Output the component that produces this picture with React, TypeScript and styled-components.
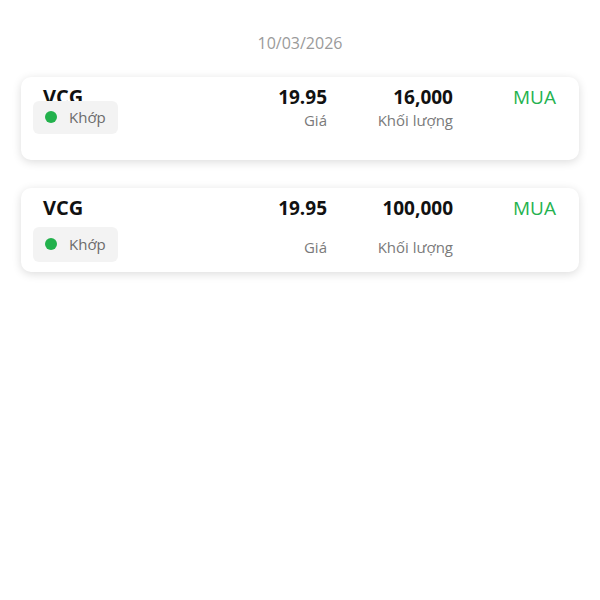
import React from "react";
import styled, { createGlobalStyle } from "styled-components";

interface OrderT {
  symbol: string;
  status: string;
  price: string;
  volume: string;
  side: string;
  collapsed?: boolean;
}

const orders: OrderT[] = [
  { symbol: "VCG", status: "Khớp", price: "19.95", volume: "16,000", side: "MUA", collapsed: true },
  { symbol: "VCG", status: "Khớp", price: "19.95", volume: "100,000", side: "MUA" },
];

export default function App() {
  return (
    <>
      <GlobalStyle />
      <Page>
        <DateLine>10/03/2026</DateLine>
        <List>
          {orders.map((o, i) => (
            <OrderCard key={i} order={o} />
          ))}
        </List>
      </Page>
    </>
  );
}

function OrderCard({ order }: { order: OrderT }) {
  return (
    <Card>
      <Row>
        <Left>
          <Symbol $collapsed={order.collapsed}>{order.symbol}</Symbol>
          <Badge $collapsed={order.collapsed}>
            <Dot />
            {order.status}
          </Badge>
        </Left>
        <NumCol $width={100}>
          <Value>{order.price}</Value>
          <Label>Giá</Label>
        </NumCol>
        <NumCol $width={126}>
          <Value>{order.volume}</Value>
          <Label>Khối lượng</Label>
        </NumCol>
        <NumCol $width={103}>
          <Side>{order.side}</Side>
        </NumCol>
      </Row>
    </Card>
  );
}

const GlobalStyle = createGlobalStyle`
  body {
    margin: 0;
    background: #fff;
    font-family: "Open Sans", "Noto Sans", sans-serif;
  }
`;

const Page = styled.div`
  padding: 32px 0 40px;
`;

const DateLine = styled.div`
  text-align: center;
  font-size: 16px;
  line-height: 22px;
  color: #9a9a9a;
`;

const List = styled.div`
  display: flex;
  flex-direction: column;
  gap: 28px;
  padding: 23px 21px 0;
`;

const Card = styled.div`
  min-height: 83px;
  box-sizing: border-box;
  padding: 7px 23px 10px 12px;
  background: #fff;
  border-radius: 10px;
  box-shadow: 0 2px 10px rgba(0, 0, 0, 0.14);
  display: flex;
  align-items: flex-start;
`;

const Row = styled.div`
  flex: 1;
  display: flex;
  align-items: stretch;
`;

const Left = styled.div`
  flex: 1;
  display: flex;
  flex-direction: column;
  align-items: flex-start;
`;

const Symbol = styled.div<{ $collapsed?: boolean }>`
  padding-left: 10px;
  font-size: 20px;
  font-weight: 700;
  line-height: 26px;
  color: #111;
  height: ${(p) => (p.$collapsed ? "16.5px" : "26px")};
  overflow: visible;
`;

const Badge = styled.div<{ $collapsed?: boolean }>`
  position: relative;
  margin-top: ${(p) => (p.$collapsed ? "0" : "5.5px")};
  height: ${(p) => (p.$collapsed ? "33px" : "35px")};
  display: flex;
  align-items: center;
  gap: 12px;
  padding: 0 12px;
  background: #f3f3f3;
  border-radius: 6px;
  font-size: 15px;
  color: #6b6b6b;
`;

const Dot = styled.span`
  width: 12px;
  height: 12px;
  border-radius: 50%;
  background: #22b14c;
`;

const NumCol = styled.div<{ $width: number }>`
  width: ${(p) => p.$width}px;
  display: flex;
  flex-direction: column;
  justify-content: space-between;
  align-items: flex-end;
`;

const Value = styled.div`
  font-size: 19px;
  font-weight: 700;
  line-height: 26px;
  color: #111;
`;

const Label = styled.div`
  font-size: 15px;
  line-height: 20px;
  padding-bottom: 5px;
  color: #7a7a7a;
`;

const Side = styled.div`
  font-size: 19px;
  line-height: 26px;
  color: #25b24f;
`;
